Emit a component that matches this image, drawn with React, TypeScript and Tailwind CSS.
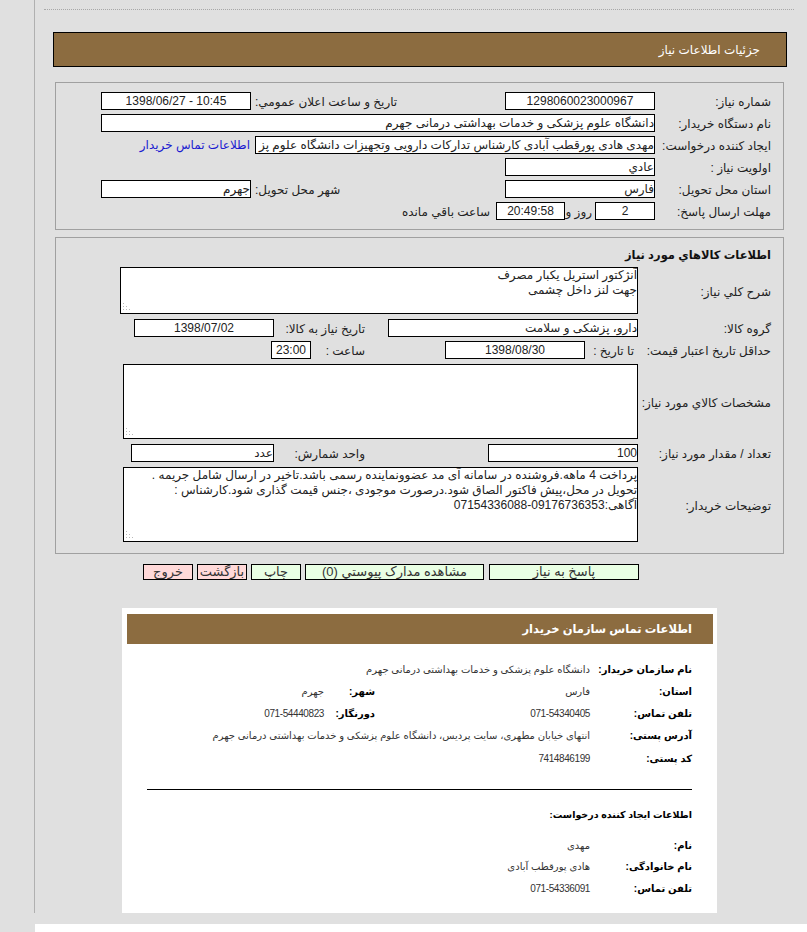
const font = "font-['Liberation_Sans','DejaVu_Sans',sans-serif]"

function Field({ width, center, ltr, children }: { width: string; center?: boolean; ltr?: boolean; children?: React.ReactNode }) {
  return (
    <div
      dir={ltr ? "ltr" : undefined}
      className={`${width} ${center ? "text-center" : "text-right"} h-[18px] shrink-0 overflow-hidden whitespace-nowrap border border-black bg-white text-[12px] leading-[16px] text-[#222]`}
    >
      {children}
    </div>
  )
}

function Note({ width, pad, left, children }: { width: string; pad?: string; left?: boolean; children: React.ReactNode }) {
  return (
    <div className={`${width} ${pad ?? ""} ${left ? "text-left pl-[4px]" : "text-right"} h-[18px] shrink-0 whitespace-nowrap text-[12px] leading-[20px] text-[#222]`}>
      {children}
    </div>
  )
}

function Row1({ label, children }: { label: string; children: React.ReactNode }) {
  return (
    <div className="flex h-[18px] items-center">
      <Note width="w-[116px]">{label}</Note>
      {children}
    </div>
  )
}

function Row2({ label, children }: { label: string; children: React.ReactNode }) {
  return (
    <div className="mt-[4px] flex h-[18px] items-center">
      <Note width="w-[133px]">{label}</Note>
      {children}
    </div>
  )
}

// dotted resize corner, the browser's own one looks different
function Grip() {
  return (
    <svg className="absolute bottom-[3px] left-[3px]" width="8" height="8" viewBox="0 0 8 8" fill="#b8b8b8">
      <rect x="0" y="0" width="1" height="1" />
      <rect x="0" y="3" width="1" height="1" />
      <rect x="3" y="3" width="1" height="1" />
      <rect x="0" y="6" width="1" height="1" />
      <rect x="3" y="6" width="1" height="1" />
      <rect x="6" y="6" width="1" height="1" />
    </svg>
  )
}

function Area({ width, height, value, label, gap }: { width: string; height: string; value: string; label: string; gap: string }) {
  return (
    <div className={`${gap} flex items-center`}>
      <Note width="w-[133px]">{label}</Note>
      <div className="relative">
        <textarea
          readOnly
          dir="rtl"
          wrap="off"
          defaultValue={value}
          className={`${width} ${height} block resize-none overflow-hidden border border-black bg-white text-[12px] leading-[15px] text-[#222] outline-none`}
        />
        <Grip />
      </div>
    </div>
  )
}

function Btn({ width, pink, children }: { width: string; pink?: boolean; children: React.ReactNode }) {
  return (
    <button
      className={`${width} ${pink ? "bg-[#ffd9d9]" : "bg-[#e9ffe4]"} h-[16px] overflow-hidden whitespace-nowrap border border-black text-center text-[13px] leading-[14px] text-[#333]`}
    >
      {children}
    </button>
  )
}

function CardRow({ label, value, label2, value2, top, num }: { label: string; value: string; label2?: string; value2?: string; top: string; num?: boolean }) {
  const digits = num ? "tracking-[-0.4px]" : ""
  return (
    <div className={`${top} flex h-[14px] items-center text-[10px] leading-[14px]`}>
      <div className="w-[102px] shrink-0 text-right font-bold text-black">{label}</div>
      <div className={`${digits} w-[215px] shrink-0 whitespace-nowrap text-right text-[#333]`}>{value}</div>
      {label2 && <div className="w-[51px] shrink-0 whitespace-nowrap text-right font-bold text-black">{label2}</div>}
      {value2 && <div className={`${digits} whitespace-nowrap text-right text-[#333]`}>{value2}</div>}
    </div>
  )
}

export default function App() {
  return (
    <div dir="ltr" className={`${font} flex h-[932px] w-[807px] flex-col overflow-hidden bg-[#e0e0e0]`}>
      <div className="flex h-[924px] shrink-0">
        <div className="h-[913px] w-[35px] shrink-0 border-r border-[#b0b0b0]" />

        <div className="flex-1">
          <div className="ml-[9px] mt-[9px] w-[750px] border-t border-dotted border-[#a8a8a8]" />

          {/* Page title */}
          <div dir="rtl" className="ml-[18px] mt-[22px] h-[35px] w-[734px] border border-black bg-[#8c6c40] pr-[26px] text-[12px] leading-[35px] text-white">
            جزئیات اطلاعات نیاز
          </div>

          {/* Request details */}
          <div dir="rtl" className="ml-[20px] mt-[15px] flex h-[148px] w-[729px] flex-col gap-[4px] border border-[#a0a0a0] pr-[12px] pt-[9px]">
            <Row1 label="شماره نیاز:">
              <Field width="w-[150px]" center>1298060023000967</Field>
              <Note width="w-[254px]" left>تاریخ و ساعت اعلان عمومي:</Note>
              <Field width="w-[150px]" center ltr>1398/06/27 - 10:45</Field>
            </Row1>
            <Row1 label="نام دستگاه خریدار:">
              <Field width="w-[554px]">دانشگاه علوم پزشکی و خدمات بهداشتی درمانی جهرم</Field>
            </Row1>
            <Row1 label="ایجاد کننده درخواست:">
              <Field width="w-[400px]">مهدی هادی پورقطب آبادی کارشناس تدارکات دارویی وتجهیزات دانشگاه علوم پز</Field>
              <a className="pr-[5px] text-[12px] text-[#1a1ad0]">اطلاعات تماس خریدار</a>
            </Row1>
            <Row1 label="اولویت نیاز :">
              <Field width="w-[150px]">عادي</Field>
            </Row1>
            <Row1 label="استان محل تحویل:">
              <Field width="w-[150px]">فارس</Field>
              <Note width="w-[254px]" left>شهر محل تحویل:</Note>
              <Field width="w-[150px]">جهرم</Field>
            </Row1>
            <Row1 label="مهلت ارسال پاسخ:">
              <Field width="w-[60px]" center>2</Field>
              <Note width="w-[30px]" pad="pr-[3px]">روز و</Note>
              <Field width="w-[69px]" center>20:49:58</Field>
              <Note width="w-[96px]" pad="pr-[6px]">ساعت باقي مانده</Note>
            </Row1>
          </div>

          {/* Goods details */}
          <div dir="rtl" className="ml-[20px] mt-[7px] h-[317px] w-[729px] border border-[#a0a0a0] pr-[12px] pt-[8px]">
            <div className="h-[21px] text-[11.5px] font-bold leading-[18px] text-[#111]">اطلاعات كالاهاي مورد نياز</div>
            <Area label="شرح کلي نیاز:" width="w-[518px]" height="h-[47px]" gap="" value={"آنژکتور استریل یکبار مصرف\nجهت لنز داخل چشمی"} />
            <div className="mt-[5px] flex h-[18px] items-center">
              <Note width="w-[133px]">گروه کالا:</Note>
              <Field width="w-[250px]">دارو، پزشکی و سلامت</Field>
              <Note width="w-[114px]" pad="pr-[23px]">تاریخ نیاز به کالا:</Note>
              <Field width="w-[140px]" center>1398/07/02</Field>
            </div>
            <Row2 label="حداقل تاریخ اعتبار قیمت:">
              <Note width="w-[53px]" pad="pr-[4px]">تا تاریخ :</Note>
              <Field width="w-[140px]" center>1398/08/30</Field>
              <Note width="w-[134px]" pad="pr-[80px]">ساعت :</Note>
              <Field width="w-[40px]" center>23:00</Field>
            </Row2>
            <Area label="مشخصات کالاي مورد نیاز:" width="w-[515px]" height="h-[75px]" gap="mt-[5px]" value="" />
            <div className="mt-[5px] flex h-[18px] items-center">
              <Note width="w-[133px]">تعداد / مقدار مورد نیاز:</Note>
              <Field width="w-[150px]">100</Field>
              <Note width="w-[214px]" pad="pr-[123px]">واحد شمارش:</Note>
              <Field width="w-[143px]">عدد</Field>
            </div>
            <Area
              label="توضیحات خریدار:"
              width="w-[515px]"
              height="h-[75px]"
              gap="mt-[5px]"
              value={"پرداخت 4 ماهه.فروشنده در سامانه آی مد عضوونماینده رسمی باشد.تاخیر در ارسال شامل جریمه .\nتحویل در محل،پیش فاکتور الصاق شود.درصورت موجودی ،جنس قیمت گذاری شود.کارشناس :\nآگاهی:09176736353-07154336088"}
            />
          </div>

          {/* Actions */}
          <div dir="rtl" className="ml-[108px] mt-[10px] flex w-[496px] gap-[4px]">
            <Btn width="w-[150px]">پاسخ به نیاز</Btn>
            <Btn width="w-[179px] mr-[1px]">مشاهده مدارک پیوستي (0)</Btn>
            <Btn width="w-[50px]">چاپ</Btn>
            <Btn width="w-[50px]" pink>بازگشت</Btn>
            <Btn width="w-[50px]" pink>خروج</Btn>
          </div>

          {/* Buyer contact card */}
          <div dir="rtl" className="ml-[87px] mt-[28px] h-[305px] w-[595px] bg-white pl-[5px] pr-[4px] pt-[6px]">
            <div className="h-[30px] bg-[#8c6c40] pr-[21px] text-[11.5px] font-bold leading-[30px] text-white">
              اطلاعات تماس سازمان خریدار
            </div>
            <div className="pr-[21px]">
              <CardRow top="mt-[19px]" label="نام سازمان خریدار:" value="دانشگاه علوم پزشکی و خدمات بهداشتی درمانی جهرم" />
              <CardRow top="mt-[8px]" label="استان:" value="فارس" label2="شهر:" value2="جهرم" />
              <CardRow top="mt-[8px]" num label="تلفن تماس:" value="071-54340405" label2="دورنگار:" value2="071-54440823" />
              <CardRow top="mt-[8px]" label="آدرس پستی:" value="انتهای خیابان مطهری، سایت پردیس، دانشگاه علوم پزشکی و خدمات بهداشتی درمانی جهرم" />
              <CardRow top="mt-[9px]" num label="کد پستی:" value="7414846199" />
            </div>
            <div className="ml-[20px] mr-[21px] mt-[23px] border-t border-black" />
            <div className="mr-[21px] mt-[18px] text-[9.5px] font-bold leading-[14px] text-black">اطلاعات ایجاد کننده درخواست:</div>
            <div className="pr-[21px]">
              <CardRow top="mt-[17px]" label="نام:" value="مهدی" />
              <CardRow top="mt-[7px]" label="نام خانوادگی:" value="هادی پورقطب آبادی" />
              <CardRow top="mt-[8px]" num label="تلفن تماس:" value="071-54336091" />
            </div>
          </div>
        </div>
      </div>
      <div className="ml-[35px] flex-1 bg-white" />
    </div>
  )
}
